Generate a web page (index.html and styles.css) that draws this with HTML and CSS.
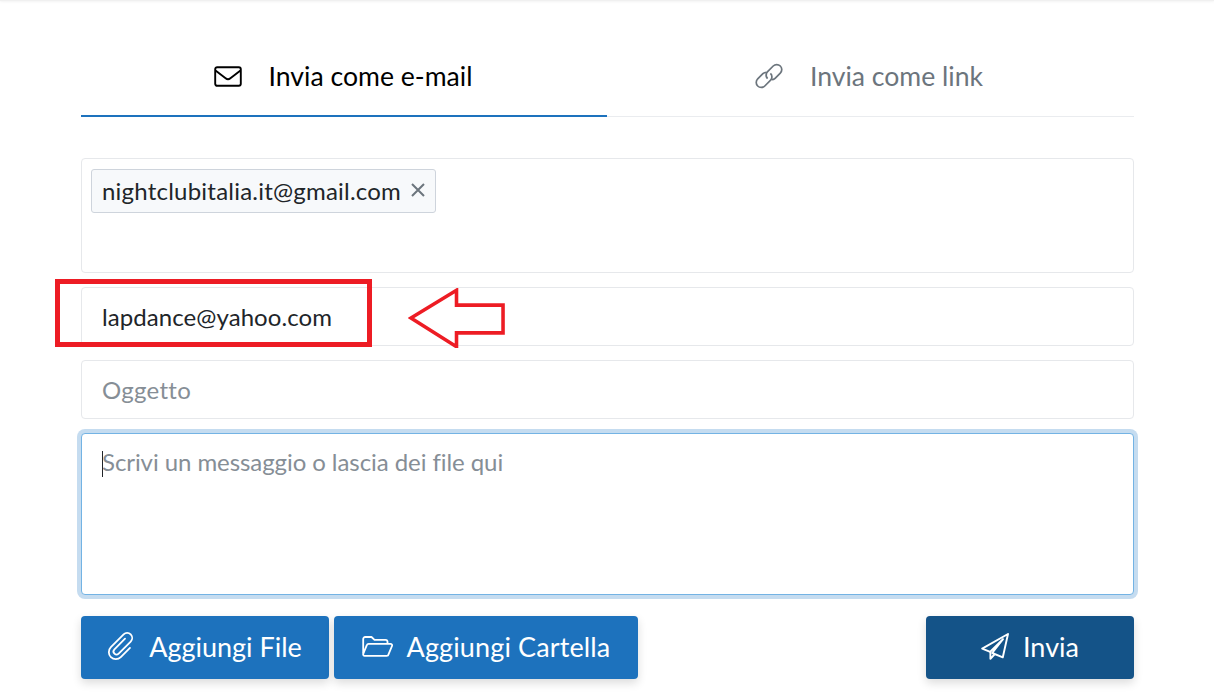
FILE: index.html
```html
<!DOCTYPE html>
<html lang="it">
<head>
<meta charset="utf-8">
<title>Invia</title>
<link rel="stylesheet" href="styles.css">
</head>
<body>
<div class="topbar"></div>
<main class="panel">
  <nav class="tabs">
    <div class="tab active">
      <svg class="tab-icon" viewBox="0 0 28 21" fill="none" stroke="currentColor" stroke-width="1.9" stroke-linejoin="round"><rect x="1.2" y="1.2" width="25.6" height="18.6" rx="2"/><path d="M1.5 4.5 11.6 12.2a3.8 3.8 0 0 0 4.8 0L26.5 4.5"/></svg>
      <span>Invia come e-mail</span>
    </div>
    <div class="tab">
      <svg class="tab-icon link" viewBox="0 0 28 28" fill="none" stroke="currentColor" stroke-width="1.7"><path d="M12.6 16.6a5 5 0 0 1-1.2-5.1 5 5 0 0 1 1.2-1.9l5.6-5.6a5 5 0 0 1 7.1 7.1l-5.2 5.2a5 5 0 0 1-3.4 1.4"/><path d="M15.4 11.4a5 5 0 0 1 1.2 5.1 5 5 0 0 1-1.2 1.9l-5.6 5.6a5 5 0 0 1-7.1-7.1l5.2-5.2a5 5 0 0 1 3.4-1.4"/></svg>
      <span>Invia come link</span>
    </div>
  </nav>
  <form class="form">
    <div class="field recipients">
      <span class="chip"><span class="chip-text">nightclubitalia.it@gmail.com</span><svg class="chip-x" viewBox="0 0 14 14" stroke="currentColor" stroke-width="2" fill="none"><path d="M1 1l12 12M13 1 1 13"/></svg></span>
    </div>
    <div class="field line value">lapdance@yahoo.com</div>
    <div class="field line placeholder subject">Oggetto</div>
    <div class="field message placeholder"><span class="caret"></span>Scrivi un messaggio o lascia dei file qui</div>
    <div class="actions">
      <button type="button" class="btn">
        <svg class="btn-icon clip" viewBox="0 0 31 31" fill="none" stroke="currentColor" stroke-width="1.8" stroke-linecap="round"><path transform="rotate(45 15.5 15.5) translate(2.5 -1.5)" d="M10 9V24a3 3 0 0 0 6 0V7a5 5 0 0 0-10 0V25a7 7 0 0 0 14 0V12"/></svg>
        Aggiungi File
      </button>
      <button type="button" class="btn">
        <svg class="btn-icon folder" viewBox="0 0 31 21" fill="none" stroke="currentColor" stroke-width="1.8" stroke-linejoin="round"><path d="M1.2 17.5V3a2 2 0 0 1 2-2h6.3l3 2.8h11a2 2 0 0 1 2 2v2"/><path d="M6.6 7.8h21.9a1.6 1.6 0 0 1 1.5 2.2l-3.4 8.2a2 2 0 0 1-1.9 1.6H2.7a1.5 1.5 0 0 1-1.4-2.1l3.5-8.6a1.9 1.9 0 0 1 1.8-1.3z"/></svg>
        <span class="wide">Aggiungi Cartella</span>
      </button>
      <button type="button" class="btn send">
        <svg class="btn-icon plane" viewBox="0 0 28 28" fill="none" stroke="currentColor" stroke-width="1.9" stroke-linejoin="round"><path d="M27 1 1.2 15.6l8 3.2L22 6.2 11.2 20l10.6 4.3z"/><path d="M9.4 19v6.8l4-4.3"/></svg>
        Invia
      </button>
    </div>
  </form>
</main>
<div class="red-box"></div>
<svg class="red-arrow" viewBox="0 0 100 60" fill="none" stroke="#ed1c24" stroke-width="3.6"><path d="M3 30 49 2v15h47v28H49v14z"/></svg>
</body>
</html>
```
FILE: styles.css
```css
* { box-sizing: border-box; }
html, body { margin: 0; height: 100%; }
body {
  background: #fff;
  font-family: Lato, "Liberation Sans", sans-serif;
  color: #212529;
  overflow: hidden;
}
.topbar {
  height: 1px;
  background: #f0f0f0;
  box-shadow: 0 0 3px rgba(0, 0, 0, .15);
}
.panel {
  width: 1053px;
  margin: 0 0 0 81px;
  padding-top: 36px;
}
.tabs {
  display: flex;
  border-bottom: 1px solid #eaecef;
  height: 80px;
}
.tab {
  flex: 0 0 526px;
  display: flex;
  align-items: center;
  justify-content: center;
  gap: 27px;
  height: 80px;
  padding: 0 2px 2px 0;
  font-size: 26.6px;
  color: #6c757d;
}
.tab.active {
  color: #000;
  border-bottom: 2px solid #1d72bd;
  padding-bottom: 0;
}
.tab-icon { width: 28px; height: 21px; flex: none; }
.tab-icon.link { height: 28px; }
.form { margin-top: 41px; display: flex; flex-direction: column; gap: 14px; }
.field {
  border: 1px solid #e6e8eb;
  border-radius: 4px;
  background: #fff;
  font-size: 24px;
}
.recipients { height: 115px; padding: 10px 9px; }
.chip {
  display: inline-flex;
  align-items: center;
  height: 44px;
  padding: 0 10px 2px;
  border: 1px solid #ced4dc;
  border-radius: 3px;
  background: #f7f9fb;
}
.chip-text { letter-spacing: .22px; }
.chip-x { width: 14px; height: 14px; margin-left: 10px; color: #6c757d; }
.line { height: 59px; padding: 0 20px; display: flex; align-items: center; }
.value { color: #212529; letter-spacing: .07px; }
.placeholder { color: #868e96; }
.subject { letter-spacing: .3px; }
.message {
  position: relative;
  height: 162px;
  padding: 12px 20px;
  border-color: #73b3e4;
  box-shadow: 0 0 0 4px #c5dcf0;
  line-height: 32px;
  letter-spacing: -.07px;
}
.caret {
  position: absolute;
  left: 20px;
  top: 17px;
  width: 1px;
  height: 26px;
  background: #212529;
}
.actions { display: flex; gap: 5px; margin-top: 7px; }
.btn {
  display: inline-flex;
  align-items: center;
  justify-content: center;
  gap: 14px;
  height: 63px;
  padding: 0 0 2px;
  border: 0;
  border-radius: 4px;
  background: #1d72bd;
  color: #fff;
  font: 27px Lato, "Liberation Sans", sans-serif;
  box-shadow: 0 4px 10px rgba(0, 0, 0, .14);
}
.btn:nth-child(1) { width: 248px; }
.btn:nth-child(2) { width: 304px; }
.btn.send { width: 208px; margin-left: auto; background: #145388; }
.wide { letter-spacing: .13px; }
.btn-icon { flex: none; }
.clip { width: 31px; height: 31px; margin: -2px -2px -2px -2px; }
.folder { width: 31px; height: 21px; }
.plane { width: 28px; height: 28px; }
.red-box {
  position: absolute;
  left: 55px;
  top: 279px;
  width: 317px;
  height: 68px;
  border: 5px solid #ed1c24;
}
.red-arrow {
  position: absolute;
  left: 408px;
  top: 288px;
  width: 99px;
  height: 60px;
}
```
